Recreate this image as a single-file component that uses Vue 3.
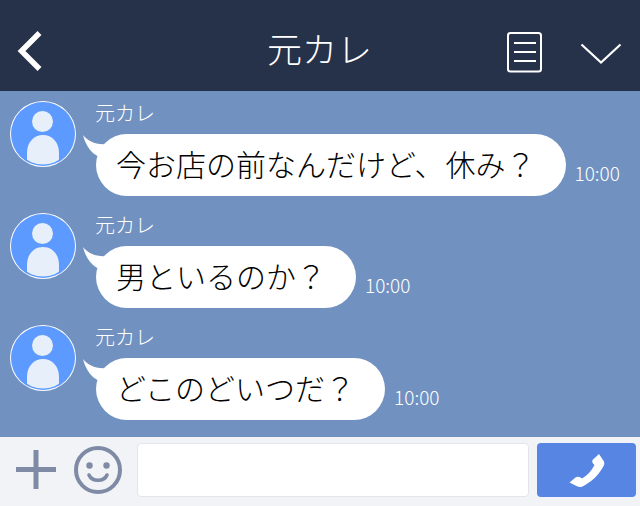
<script setup>
const messages = [
  { id: 1, before: '今お店の前なんだけど', mark: '、', after: '休み？' },
  { id: 2, before: '男といるのか？', mark: '', after: '' },
  { id: 3, before: 'どこのどいつだ？', mark: '', after: '' }
]
</script>

<template>
  <div class="screen">
    <header class="head">
      <svg class="back" width="26" height="40" viewBox="0 0 26 40"><path d="M23.500 2 L5.500 20 L23.500 38" fill="none" stroke="#fff" stroke-width="5.500" stroke-linejoin="miter"/></svg>
      <div class="title">元カレ</div>
      <svg class="memo" width="36" height="41" viewBox="0 0 36 41"><rect x="1" y="1" width="33" height="38.5" rx="2.5" fill="none" stroke="#fff" stroke-width="2"/><path d="M7 11h22M7 20h22M7 29h22" stroke="#fff" stroke-width="2"/></svg>
      <svg class="chev" width="42" height="24" viewBox="0 0 42 24"><path d="M1.5 2.5 L21 20.5 L40.500 2.500" fill="none" stroke="#fff" stroke-width="2.200"/></svg>
    </header>

    <main class="chat">
      <div v-for="m in messages" :key="m.id" class="row">
        <svg class="avatar" width="66" height="66" viewBox="0 0 66 66">
          <defs><clipPath :id="'c' + m.id"><circle cx="33" cy="33" r="30.500"/></clipPath></defs>
          <circle cx="33" cy="33" r="33" fill="#fff"/>
          <circle cx="33" cy="33" r="32" fill="#5c9aff"/>
          <g :clip-path="'url(#c' + m.id + ')'" fill="#e7effb">
            <circle cx="32.500" cy="20.500" r="10.500"/>
            <path d="M17 66 V52 C17 41 24 34 33 34 C42 34 49 41 49 52 V66 Z"/>
          </g>
        </svg>
        <div class="body">
          <div class="name">元カレ</div>
          <div class="line">
            <div class="bubble">
              <svg class="tail" width="30" height="26" viewBox="0 0 30 26"><path d="M0 0 C5 6 12 10 24 9 L28 25 C14 24 4 16 0 0 Z" fill="#fff"/></svg>
              <span>{{ m.before }}<span v-if="m.mark" class="mark">{{ m.mark }}</span>{{ m.after }}</span>
            </div>
            <time class="time">10:00</time>
          </div>
        </div>
      </div>
    </main>

    <footer class="foot">
      <svg class="plus" width="40" height="40" viewBox="0 0 40 40"><path d="M0 19.500h40M20 0v39" stroke="#7f8ba5" stroke-width="5"/></svg>
      <svg class="smile" width="48" height="48" viewBox="0 0 48 48"><circle cx="24" cy="24" r="22" fill="none" stroke="#7f8ba5" stroke-width="4"/><circle cx="15.500" cy="19.500" r="3.200" fill="#7f8ba5"/><circle cx="32.500" cy="19.500" r="3.200" fill="#7f8ba5"/><path d="M15 29 C18 36 30 36 33 29" fill="none" stroke="#7f8ba5" stroke-width="3.600" stroke-linecap="round"/></svg>
      <div class="input"></div>
      <div class="call">
        <svg width="38" height="36" viewBox="0 0 38 36"><path d="M31 2 L36 9.500 C36.800 11.500 36 13.500 35 15 C30 24 23 30 14.500 34.500 C12.500 35.500 10.500 35 8.500 34 L1.500 30.500 L7.500 25.500 C9 24.500 11 24.500 12.500 25.500 L14 26.500 C19 23.500 23.500 19 26.500 13 L25 11.500 C24 10 24 8.500 25 7.500 Z" fill="#fff"/></svg>
      </div>
    </footer>
  </div>
</template>

<style scoped>
.screen { width: 640px; height: 506px; display: flex; flex-direction: column; overflow: hidden; font-family: "Noto Sans CJK JP", "Noto Sans", sans-serif; font-weight: 300; }
.head { height: 91px; flex: none; background: #263249; display: flex; align-items: center; position: relative; padding-left: 16px; box-sizing: border-box; color: #fff; }
.back { flex: none; margin-top: 10px; }
.title { position: absolute; left: 0; right: 0; top: 0; text-align: center; font-size: 35px; line-height: 95px; margin-left: -1px; }
.memo { flex: none; margin-left: 465px; margin-top: 13px; }
.chev { flex: none; margin-left: 37px; margin-top: 17px; }
.chat { height: 346px; flex: none; background: #7191c0; padding: 10px 0 0 10px; box-sizing: border-box; display: flex; flex-direction: column; gap: 46px; }
.row { display: flex; height: 66px; }
.avatar { flex: none; }
.body { margin-left: 20px; }
.name { color: #fff; font-size: 20px; line-height: 26px; height: 34px; margin-top: -1px; margin-left: -1px; }
.line { display: flex; align-items: flex-end; }
.bubble { position: relative; height: 62px; border-radius: 31px; background: #fff; padding: 0 30px 3px 20px; box-sizing: border-box; display: flex; align-items: center; font-size: 30px; line-height: 59px; color: #000; white-space: nowrap; }
.mark { margin-right: 1px; }
.tail { position: absolute; left: -13px; top: 1px; }
.time { color: #fff; font-size: 19px; line-height: 24px; margin-left: 9px; margin-bottom: 11px; }
.foot { flex: 1; background: #f1f3f7; display: flex; align-items: center; padding-bottom: 3px; }
.plus { flex: none; margin-left: 16px; }
.smile { flex: none; margin-left: 18px; }
.input { flex: none; width: 392px; height: 54px; margin-left: 15px; background: #fff; border: 1px solid #e3e5ea; border-radius: 4px; box-sizing: border-box; }
.call { flex: none; width: 99px; height: 54px; margin-left: 8px; background: #5685e3; border-radius: 4px; display: flex; align-items: center; justify-content: center; }
</style>
